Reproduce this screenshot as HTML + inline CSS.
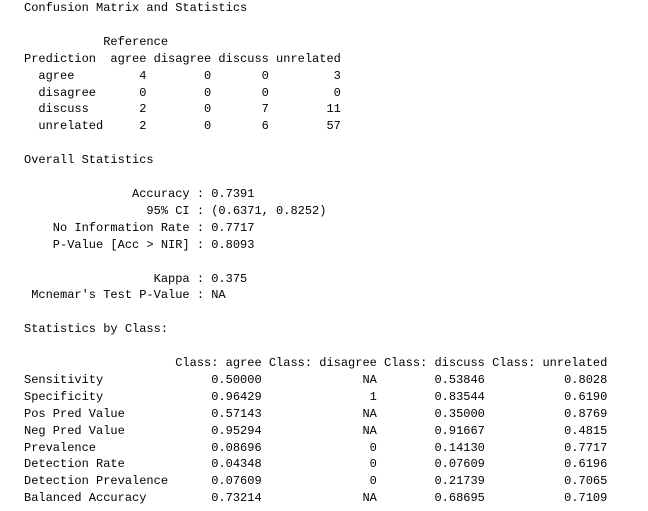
<!DOCTYPE html>
<html><head><meta charset="utf-8"><style>
html,body{margin:0;padding:0;background:#fff;width:648px;height:511px;overflow:hidden}
pre{margin:0;position:absolute;left:24px;top:0;font-family:"Liberation Mono",monospace;font-size:12px;line-height:16.9px;color:#000}
</style></head><body><pre>Confusion Matrix and Statistics

           Reference
Prediction  agree disagree discuss unrelated
  agree         4        0       0         3
  disagree      0        0       0         0
  discuss       2        0       7        11
  unrelated     2        0       6        57

Overall Statistics

               Accuracy : 0.7391
                 95% CI : (0.6371, 0.8252)
    No Information Rate : 0.7717
    P-Value [Acc &gt; NIR] : 0.8093

                  Kappa : 0.375
 Mcnemar's Test P-Value : NA

Statistics by Class:

                     Class: agree Class: disagree Class: discuss Class: unrelated
Sensitivity               0.50000              NA        0.53846           0.8028
Specificity               0.96429               1        0.83544           0.6190
Pos Pred Value            0.57143              NA        0.35000           0.8769
Neg Pred Value            0.95294              NA        0.91667           0.4815
Prevalence                0.08696               0        0.14130           0.7717
Detection Rate            0.04348               0        0.07609           0.6196
Detection Prevalence      0.07609               0        0.21739           0.7065
Balanced Accuracy         0.73214              NA        0.68695           0.7109</pre></body></html>
